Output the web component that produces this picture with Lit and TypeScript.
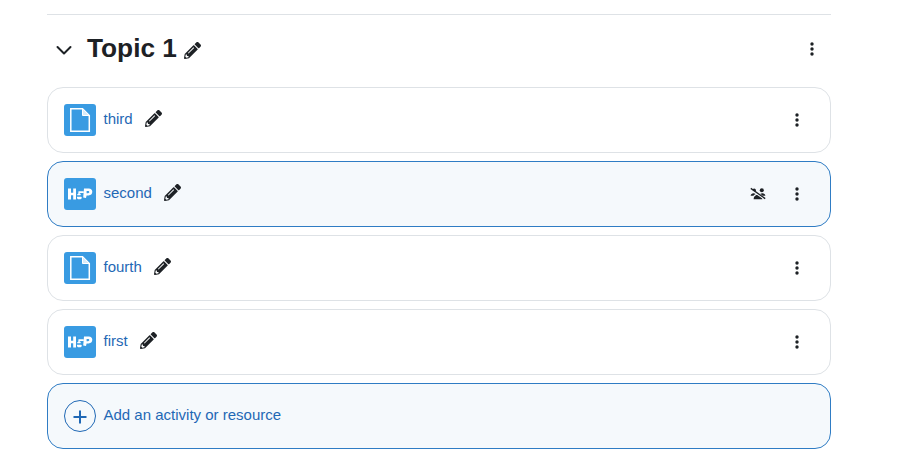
import { LitElement, html, css, svg } from "lit";
import { customElement } from "lit/decorators.js";

const pencil = html`<svg class="pencil" viewBox="0 0 512 512"><path fill="currentColor" d="M497.9 142.1l-46.1 46.1c-4.7 4.7-12.3 4.7-17 0l-111-111c-4.7-4.7-4.7-12.3 0-17l46.1-46.1c18.7-18.7 49.1-18.7 67.9 0l60.1 60.1c18.8 18.7 18.8 49.1 0 67.9zM284.2 99.8L21.6 362.4.4 483.9c-2.9 16.4 11.4 30.6 27.8 27.8l121.5-21.3 262.6-262.6c4.7-4.7 4.7-12.3 0-17l-111-111c-4.8-4.7-12.4-4.7-17.1 0zM124.1 339.9c-5.5-5.5-5.5-14.3 0-19.8l154-154c5.5-5.5 14.3-5.5 19.8 0s5.5 14.3 0 19.8l-154 154c-5.5 5.5-14.3 5.5-19.8 0zM88 424h48v36.3l-64.5 11.3-31.1-31.1L51.7 376H88v48z"/></svg>`;

const kebab = html`<svg class="kebab" viewBox="0 0 4 14"><circle cx="2" cy="2" r="1.7" fill="currentColor"/><circle cx="2" cy="7" r="1.7" fill="currentColor"/><circle cx="2" cy="12" r="1.7" fill="currentColor"/></svg>`;

const pageIcon = html`<svg class="modicon" viewBox="0 0 32 32"><rect width="32" height="32" rx="3" fill="#399be2"/><path d="M6.8 4.7H18.5L25.3 11.5V27.3H6.8Z" fill="none" stroke="#fff" stroke-width="1.5"/><path d="M18.5 4.7V11.5H25.3Z" fill="#d7ebf9" stroke="#fff" stroke-width="1"/></svg>`;

const h5pIcon = html`<svg class="modicon" viewBox="0 0 32 32"><rect width="32" height="32" rx="3" fill="#399be2"/>${svg`<path fill="#fff" fill-rule="evenodd" d="M4 10.5h3v4.3h2.2v-4.3h2.8v11H9.2v-4.2H7v4.2H4ZM20 10.5h4.8c2.2 0 3.5 1.3 3.5 3.3 0 2.2-1.5 3.6-3.7 3.6h-2l-.6 2.6-2.8-.4ZM22.6 13v2.2h1.4c.8 0 1.3-.4 1.3-1.1s-.5-1.1-1.3-1.1ZM14.5 13.2h5v1.7h-3.6l-.2 1c.4-.1.8-.1 1.1 0l-.3 1.4h-3.2v-1.4h.9ZM13 18.8h4.2l.8 1.2-1.4 1.3h-2.6l-1-1Z"/>`}</svg>`;

const groupsOff = html`<svg class="groups" viewBox="0 0 16 16"><g fill="currentColor"><circle cx="11.8" cy="4.2" r="2"/><circle cx="4.2" cy="4.2" r="1.7"/><path d="M3.6 13.2c0-2.6 2-4.4 4.4-4.4s4.4 1.8 4.4 4.4Z"/><path d="M.6 9.8c.2-1.8 1.4-2.6 3-2.6 1 0 1.7.3 2.2.8-1.1.4-1.9 1-2.4 1.8Z"/><path d="M15.4 9.8c-.2-1.8-1.4-2.6-3-2.6-1 0-1.7.3-2.2.8 1.1.4 1.9 1 2.4 1.8Z"/></g><path d="M.8 3.6 15 13.6" stroke="#f5f9fc" stroke-width="1.6"/><path d="M.8 2.4 15.2 12.6" stroke="currentColor" stroke-width="1.3"/></svg>`;

const activities = [
  { name: "third", icon: pageIcon, hl: false },
  { name: "second", icon: h5pIcon, hl: true },
  { name: "fourth", icon: pageIcon, hl: false },
  { name: "first", icon: h5pIcon, hl: false },
];

@customElement("app-root")
export class AppRoot extends LitElement {
  static styles = css`
    :host {
      display: block;
      box-sizing: border-box;
      width: 921px;
      height: 471px;
      padding: 14px 90px 0 47px;
      background: #fff;
      font-family: "Liberation Sans", Arial, sans-serif;
      color: #1d2125;
      overflow: hidden;
    }
    .section {
      border-top: 1px solid #dee2e6;
    }
    .header {
      display: flex;
      align-items: center;
      height: 68px;
      margin-bottom: 4px;
      padding: 0 17px 0 9px;
    }
    .chevron {
      width: 16px;
      height: 16px;
      margin-top: 2px;
      margin-right: 15px;
      flex: none;
    }
    h3 {
      margin: -2px 0 0;
      font-size: 26.25px;
      line-height: 32px;
      font-weight: 700;
    }
    .title-pencil {
      display: flex;
      margin-left: 7px;
      margin-top: 3px;
    }
    .spacer {
      flex: 1;
    }
    .list {
      display: flex;
      flex-direction: column;
      gap: 8px;
    }
    .card {
      box-sizing: border-box;
      height: 66px;
      display: flex;
      align-items: center;
      padding: 0 31px 0 16px;
      border: 1px solid #dee2e6;
      border-radius: 16px;
      background: #fff;
    }
    .card.hl {
      border-color: #2f7cc4;
      background: #f5f9fc;
    }
    .modicon {
      width: 32px;
      height: 32px;
      flex: none;
      margin-right: 7.5px;
    }
    .name {
      color: #1f68b5;
      font-size: 15px;
      line-height: 22px;
      margin-top: -3px;
    }
    .edit {
      display: flex;
      margin-left: 12px;
      margin-top: -4px;
    }
    .pencil {
      width: 17px;
      height: 17px;
      display: block;
    }
    .kebab {
      width: 4px;
      height: 14px;
      display: block;
      flex: none;
    }
    .groups {
      width: 16px;
      height: 16px;
      margin-right: 29px;
      flex: none;
    }
    .plus {
      box-sizing: border-box;
      width: 32px;
      height: 32px;
      margin-right: 7.5px;
      flex: none;
      border: 1px solid #1f68b5;
      border-radius: 50%;
      display: flex;
      align-items: center;
      justify-content: center;
      color: #1f68b5;
    }
    .plus svg {
      width: 14px;
      height: 14px;
      margin-top: 1px;
    }
  `;

  render() {
    return html`
      <div class="section">
        <div class="header">
          <svg class="chevron" viewBox="0 0 16 16"><path d="M1.5 5 8 11.5 14.5 5" fill="none" stroke="#1d2125" stroke-width="2" stroke-linecap="round" stroke-linejoin="round"/></svg>
          <h3>Topic 1</h3>
          <span class="title-pencil">${pencil}</span>
          <span class="spacer"></span>
          ${kebab}
        </div>
        <div class="list">
          ${activities.map(
            (a) => html`
              <div class="card ${a.hl ? "hl" : ""}">
                ${a.icon}
                <span class="name">${a.name}</span>
                <span class="edit">${pencil}</span>
                <span class="spacer"></span>
                ${a.hl ? groupsOff : ""}
                ${kebab}
              </div>
            `
          )}
          <div class="card hl">
            <span class="plus"><svg viewBox="0 0 14 14"><path d="M7 .5v13M.5 7h13" stroke="currentColor" stroke-width="2"/></svg></span>
            <span class="name">Add an activity or resource</span>
          </div>
        </div>
      </div>
    `;
  }
}
